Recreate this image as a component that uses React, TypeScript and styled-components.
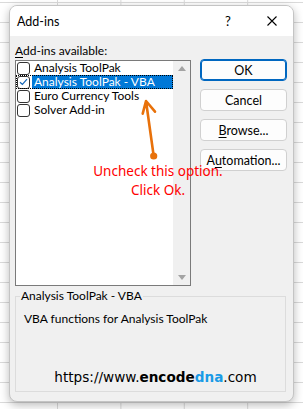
import React from 'react';
import styled, { createGlobalStyle } from 'styled-components';

const Global = createGlobalStyle`
    html, body {
        margin: 0;
        padding: 0;
    }
    body {
        width: 303px;
        height: 409px;
        overflow: hidden;
        background-color: #ffffff;
        background-image:
            linear-gradient(to right, #dadada 1px, transparent 1px),
            linear-gradient(to bottom, #dadada 1px, transparent 1px);
        background-size: 63.4px 20px;
        background-position: 57px 2px;
        font-family: Lato, "Noto Sans", sans-serif;
    }
`;

const Page = styled.div`
    padding: 5px 0 0 9px;
`;

const Dialog = styled.div`
    position: relative;
    width: 285px;
    height: 397px;
    box-sizing: border-box;
    background: #f0f0f0;
    border: 1px solid #c4c4c4;
    border-radius: 8px;
    box-shadow: 0 3px 10px rgba(0, 0, 0, 0.28);
    overflow: hidden;
    display: flex;
    flex-direction: column;
`;

const TitleBar = styled.div`
    height: 30px;
    background: #ffffff;
    display: flex;
    align-items: center;
    padding-left: 7px;
    font-size: 12.5px;
    color: #000;
`;

const Title = styled.span`
    flex: 1;
`;

const Help = styled.span`
    width: 14px;
    text-align: center;
    font-size: 13px;
    margin-right: 32px;
`;

const Close = styled.span`
    width: 10px;
    height: 10px;
    margin-right: 16px;
    display: flex;
`;

const Body = styled.div`
    flex: 1;
    display: flex;
    flex-direction: column;
    padding: 0 6px 9px 5px;
    font-size: 12px;
    color: #000;
`;

const Label = styled.div`
    line-height: 16px;
    padding-top: 7px;
`;

const Key = styled.span`
    text-decoration: underline;
    text-underline-offset: 2px;
`;

const Main = styled.div`
    display: flex;
    align-items: flex-start;
    gap: 9px;
    margin-top: 1px;
`;

const ListBox = styled.div`
    width: 176px;
    height: 226px;
    box-sizing: border-box;
    border: 1px solid #7a7a7a;
    background: #fff;
    display: flex;
`;

const Items = styled.div`
    flex: 1;
    display: flex;
    flex-direction: column;
`;

const Row = styled.div<{ $focus?: boolean }>`
    height: 14px;
    display: flex;
    align-items: center;
    padding-left: 1px;
    outline: ${p => (p.$focus ? '1px dotted #000' : 'none')};
    outline-offset: -1px;
`;

const Check = styled.span`
    width: 13px;
    height: 13px;
    box-sizing: border-box;
    border: 1px solid #333;
    border-radius: 3px;
    background: #fff;
    display: flex;
    align-items: center;
    justify-content: center;
`;

const ItemText = styled.span<{ $selected?: boolean }>`
    flex: 1;
    margin-left: 2px;
    padding-left: 2px;
    height: 14px;
    line-height: 14px;
    white-space: nowrap;
    background: ${p => (p.$selected ? '#0078d7' : 'transparent')};
    color: ${p => (p.$selected ? '#fff' : '#000')};
`;

const ScrollBar = styled.div`
    width: 17px;
    background: #f0f0f0;
    display: flex;
    flex-direction: column;
    justify-content: space-between;
    align-items: center;
    padding: 5px 0;
`;

const Arrow = styled.span<{ $down?: boolean }>`
    width: 0;
    height: 0;
    border-left: 4px solid transparent;
    border-right: 4px solid transparent;
    ${p => (p.$down ? 'border-top: 5px solid #a3a3a3;' : 'border-bottom: 5px solid #a3a3a3;')}
`;

const Buttons = styled.div`
    display: flex;
    flex-direction: column;
    gap: 8px;
    margin-top: -1px;
`;

const Button = styled.button<{ $primary?: boolean }>`
    width: 87px;
    height: 22px;
    padding: 0;
    background: #fdfdfd;
    border: 1px solid ${p => (p.$primary ? '#0067c0' : '#d0d0d0')};
    box-shadow: ${p => (p.$primary ? 'inset 0 0 0 1px #0067c0' : 'none')};
    border-radius: 4px;
    font-family: inherit;
    font-size: 12.5px;
    color: #000;
`;

const Group = styled.fieldset`
    margin: 2px 1px 0 0;
    padding: 3px 8px 6px 8px;
    border: 1px solid #dcdcdc;
    flex: 1;
    display: flex;
    flex-direction: column;
    min-width: 0;
`;

const Legend = styled.legend`
    padding: 0 1px;
    margin-left: -4px;
    line-height: 16px;
`;

const Description = styled.div`
    line-height: 16px;
    padding-top: 4px;
`;

const Footer = styled.div`
    margin-top: auto;
    padding-left: 10px;
    text-align: center;
    font-family: "DejaVu Sans", Verdana, sans-serif;
    font-size: 13.6px;
    line-height: 16px;
    color: #000;
`;

const Brand = styled.b<{ $blue?: boolean }>`
    color: ${p => (p.$blue ? '#1a9be6' : '#000')};
`;

const Note = styled.div`
    position: absolute;
    left: 78px;
    top: 156px;
    width: 140px;
    text-align: center;
    color: #ff0000;
    font-size: 13.5px;
    line-height: 19px;
    font-family: "Noto Sans", sans-serif;
    pointer-events: none;
`;

const Pointer = styled.svg`
    position: absolute;
    left: 0;
    top: 0;
    pointer-events: none;
`;

const items = [
    { name: 'Analysis ToolPak', checked: false },
    { name: 'Analysis ToolPak - VBA', checked: true },
    { name: 'Euro Currency Tools', checked: false },
    { name: 'Solver Add-in', checked: false },
];

const App = () => {
    return (
        <Page>
            <Global />
            <Dialog>
                <TitleBar>
                    <Title>Add-ins</Title>
                    <Help>?</Help>
                    <Close>
                        <svg width="10" height="10" viewBox="0 0 10 10">
                            <path d="M0.5 0.5 L9.5 9.5 M9.5 0.5 L0.5 9.5" stroke="#000" strokeWidth="1.1" fill="none" />
                        </svg>
                    </Close>
                </TitleBar>
                <Body>
                    <Label><Key>A</Key>dd-ins available:</Label>
                    <Main>
                        <ListBox>
                            <Items>
                                {items.map((it) => (
                                    <Row key={it.name} $focus={it.checked}>
                                        <Check>
                                            {it.checked && (
                                                <svg width="9" height="8" viewBox="0 0 9 8">
                                                    <path d="M1 4.2 L3.4 6.5 L8 1.2" stroke="#1466b8" strokeWidth="1.2" fill="none" />
                                                </svg>
                                            )}
                                        </Check>
                                        <ItemText $selected={it.checked}>{it.name}</ItemText>
                                    </Row>
                                ))}
                            </Items>
                            <ScrollBar>
                                <Arrow />
                                <Arrow $down />
                            </ScrollBar>
                        </ListBox>
                        <Buttons>
                            <Button $primary>OK</Button>
                            <Button>Cancel</Button>
                            <Button><Key>B</Key>rowse...</Button>
                            <Button>A<Key>u</Key>tomation...</Button>
                        </Buttons>
                    </Main>
                    <Group>
                        <Legend>Analysis ToolPak - VBA</Legend>
                        <Description>VBA functions for Analysis ToolPak</Description>
                        <Footer>
                            https://www.<Brand>encode</Brand><Brand $blue>dna</Brand>.com
                        </Footer>
                    </Group>
                </Body>
                <Pointer width="285" height="397" viewBox="0 0 285 397">
                    <path d="M143.7 150 L136 95 M132.7 107.7 L136 95 L145 105.7" stroke="#e8710a" strokeWidth="2.6" strokeLinecap="round" strokeLinejoin="round" fill="none" />
                    <circle cx="143.7" cy="150" r="3.6" fill="#e8710a" />
                </Pointer>
                <Note>
                    Uncheck this option.<br />Click Ok.
                </Note>
            </Dialog>
        </Page>
    );
};

export default App;
